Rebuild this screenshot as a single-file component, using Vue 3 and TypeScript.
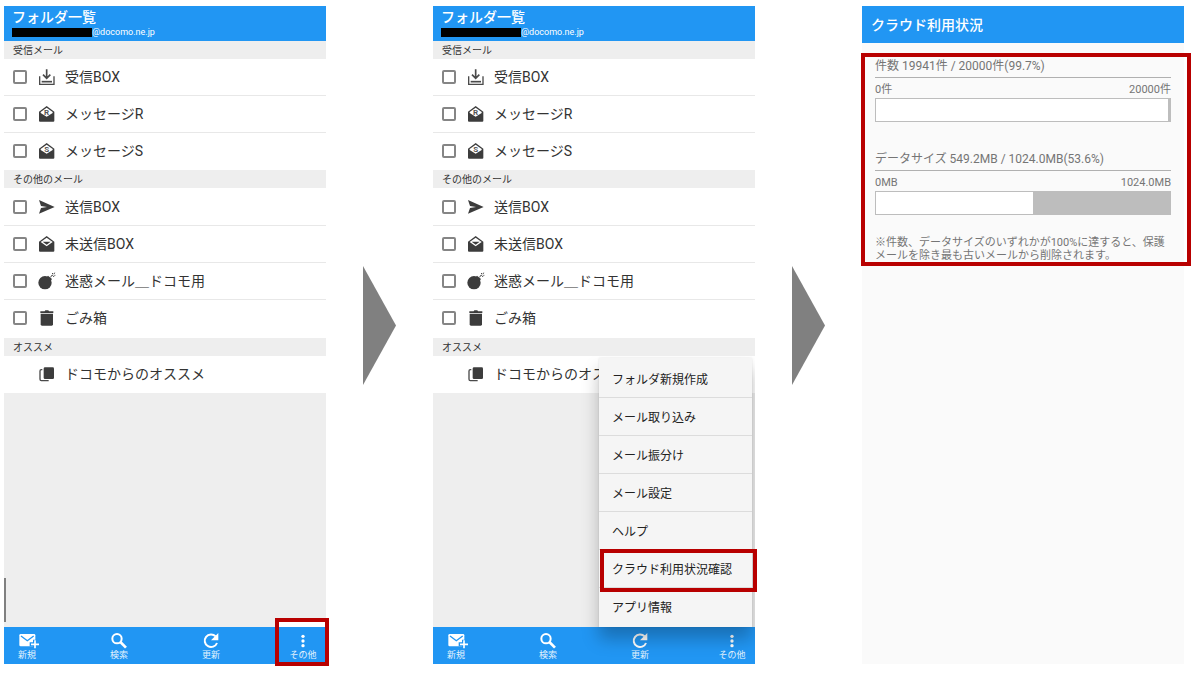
<script setup lang="ts">
import { ref } from 'vue'

type IconName = 'inbox' | 'msgR' | 'msgS' | 'send' | 'draft' | 'bomb' | 'trash' | 'copy'

interface Folder {
  label: string
  icon: IconName
  selectable: boolean
}

interface FolderGroup {
  title: string
  roomy?: boolean
  folders: Folder[]
}

interface Usage {
  summary: string
  min: string
  max: string
  percent: number
}

const groups: FolderGroup[] = [
  {
    title: '受信メール',
    folders: [
      { label: '受信BOX', icon: 'inbox', selectable: true },
      { label: 'メッセージR', icon: 'msgR', selectable: true },
      { label: 'メッセージS', icon: 'msgS', selectable: true },
    ],
  },
  {
    title: 'その他のメール',
    roomy: true,
    folders: [
      { label: '送信BOX', icon: 'send', selectable: true },
      { label: '未送信BOX', icon: 'draft', selectable: true },
      { label: '迷惑メール＿ドコモ用', icon: 'bomb', selectable: true },
      { label: 'ごみ箱', icon: 'trash', selectable: true },
    ],
  },
  {
    title: 'オススメ',
    folders: [{ label: 'ドコモからのオススメ', icon: 'copy', selectable: false }],
  },
]

const tools = ['新規', '検索', '更新', 'その他']

const menuItems = [
  'フォルダ新規作成',
  'メール取り込み',
  'メール振分け',
  'メール設定',
  'ヘルプ',
  'クラウド利用状況確認',
  'アプリ情報',
]

const usages: Usage[] = [
  { summary: '件数 19941件 / 20000件(99.7%)', min: '0件', max: '20000件', percent: 99.3 },
  { summary: 'データサイズ 549.2MB / 1024.0MB(53.6%)', min: '0MB', max: '1024.0MB', percent: 53.3 },
]

const screens = [
  { id: 'list', menuOpen: false },
  { id: 'menu', menuOpen: true },
]

const checked = ref<string[]>([])
</script>

<template>
  <main class="steps">
    <template v-for="screen in screens" :key="screen.id">
      <section class="phone">
        <header class="bar">
          <h1 class="title">フォルダ一覧</h1>
          <p class="account"><span class="mask"></span>@docomo.ne.jp</p>
        </header>

        <div class="content">
          <template v-for="group in groups" :key="group.title">
            <h2 class="group-title">{{ group.title }}</h2>
            <ul class="folders" :class="{ roomy: group.roomy }">
              <li v-for="folder in group.folders" :key="folder.label" class="folder">
                <input
                  v-if="folder.selectable"
                  :id="`${screen.id}-${folder.icon}`"
                  v-model="checked"
                  class="check"
                  type="checkbox"
                  :value="`${screen.id}-${folder.icon}`"
                />
                <span v-else class="check-space"></span>
                <svg class="icon" viewBox="0 0 48 48" aria-hidden="true">
                  <g v-if="folder.icon === 'inbox'" fill="none" stroke="#4a4a4a" stroke-width="5">
                    <path d="M23 1V28M12 17L23 28L34 17" />
                    <path d="M2 22V46H45V22" stroke-width="4" />
                    <path d="M8 38H39" stroke-width="5" />
                  </g>
                  <g v-else-if="folder.icon === 'msgR' || folder.icon === 'msgS'">
                    <path d="M0 17L23 0L46 17V44Q46 47 43 47H3Q0 47 0 44Z" fill="#3c3c3c" />
                    <path d="M23 5L41 18V21L23 32L5 21V18Z" fill="#fff" />
                    <text x="23" y="28" class="letter">{{ folder.icon === 'msgR' ? 'R' : 'S' }}</text>
                  </g>
                  <path
                    v-else-if="folder.icon === 'send'"
                    d="M0 3L47 24L0 44L6 27L24 24L6 21Z"
                    fill="#3c3c3c"
                  />
                  <g v-else-if="folder.icon === 'draft'">
                    <path d="M0 17L23 0L46 17V44Q46 47 43 47H3Q0 47 0 44Z" fill="#3c3c3c" />
                    <path d="M23 5L41 18L23 31L5 18Z" fill="#fff" />
                    <path d="M11 17H35L23 26Z" fill="#3c3c3c" />
                  </g>
                  <g v-else-if="folder.icon === 'bomb'">
                    <circle cx="18" cy="29" r="20" fill="#3c3c3c" />
                    <path d="M27 8L39 18L34 25L22 14Z" fill="#3c3c3c" />
                    <path
                      d="M35 13Q36 6 43 6M39 0L42 3M47 -1L45 3M49 7H46M44 12V9"
                      fill="none"
                      stroke="#4a4a4a"
                      stroke-width="3"
                    />
                  </g>
                  <g v-else-if="folder.icon === 'trash'" fill="#3c3c3c">
                    <path d="M4 4H17L19 1H28L30 4H43V9H4Z" />
                    <path d="M5 11H42V43Q42 47 38 47H9Q5 47 5 43Z" />
                  </g>
                  <g v-else>
                    <rect x="14" y="4" width="31" height="35" rx="4" fill="#3c3c3c" />
                    <path
                      d="M10 11H7Q3 11 3 15V40Q3 44 7 44H29"
                      fill="none"
                      stroke="#4a4a4a"
                      stroke-width="4"
                    />
                  </g>
                </svg>
                <label v-if="folder.selectable" :for="`${screen.id}-${folder.icon}`">{{ folder.label }}</label>
                <span v-else>{{ folder.label }}</span>
              </li>
            </ul>
          </template>
          <span v-if="!screen.menuOpen" class="scroll-mark"></span>
        </div>

        <nav class="toolbar">
          <button
            v-for="(tool, i) in tools"
            :key="tool"
            type="button"
            class="tool"
            :class="{ marked: i === 3 && !screen.menuOpen }"
          >
            <svg class="tool-icon" viewBox="0 0 60 48" aria-hidden="true">
              <g v-if="i === 0">
                <rect x="7" y="3" width="48" height="37" rx="4" fill="#fff" />
                <path d="M12 9L31 23L50 9" fill="none" stroke="#2196f3" stroke-width="4" />
                <path d="M54 20V48M38 34H66" stroke="#2196f3" stroke-width="12" />
                <path d="M54 22V46M42 34H66" stroke="#fff" stroke-width="5" />
              </g>
              <g v-else-if="i === 1" fill="none" stroke="#fff">
                <circle cx="24" cy="17" r="14" stroke-width="6" />
                <path d="M34 27L51 44" stroke-width="8" />
              </g>
              <g v-else-if="i === 2">
                <path d="M44 10A19 19 0 1 0 48 30" fill="none" stroke="#fff" stroke-width="6" />
                <path d="M52 0V22H30Z" fill="#fff" />
              </g>
              <g v-else fill="#fff">
                <circle cx="30" cy="10" r="5" />
                <circle cx="30" cy="24" r="5" />
                <circle cx="30" cy="38" r="5" />
              </g>
            </svg>
            <span>{{ tool }}</span>
          </button>
        </nav>

        <ul v-if="screen.menuOpen" class="menu">
          <li v-for="(item, i) in menuItems" :key="item" class="menu-row" :class="{ marked: i === 5 }">
            <button type="button" class="menu-item">{{ item }}</button>
          </li>
        </ul>
      </section>
      <div class="arrow"></div>
    </template>

    <section class="phone cloud">
      <header class="bar cloud-bar">
        <h1 class="title">クラウド利用状況</h1>
      </header>
      <div class="usage">
        <section v-for="usage in usages" :key="usage.max" class="meter">
          <h2 class="summary">{{ usage.summary }}</h2>
          <div class="range">
            <span>{{ usage.min }}</span>
            <span>{{ usage.max }}</span>
          </div>
          <div class="track">
            <div class="fill" :style="{ width: usage.percent + '%' }"></div>
          </div>
        </section>
        <p class="note">※件数、データサイズのいずれかが100%に達すると、保護メールを除き最も古いメールから削除されます。</p>
      </div>
    </section>
  </main>
</template>

<style>
body {
  margin: 0;
  background: #fff;
}
</style>

<style scoped>
* {
  box-sizing: border-box;
}

.steps {
  display: grid;
  grid-template-columns: 1fr 107px 1fr 107px 1fr;
  min-height: 100vh;
  padding: 6px 16px 13px 4px;
  font-family: Roboto, "Noto Sans CJK JP", sans-serif;
  color: #333;
}

h1,
h2,
p,
ul {
  margin: 0;
  padding: 0;
}

ul {
  list-style: none;
}

button {
  margin: 0;
  border: 0;
  background: none;
  font-family: inherit;
}

.phone {
  position: relative;
  display: flex;
  flex-direction: column;
  min-width: 0;
  background: #eee;
}

.bar {
  padding: 2px 8px 3px;
  background: #2196f3;
  color: #fff;
}

.title {
  font-size: 14px;
  line-height: 18px;
  font-weight: 500;
}

.account {
  display: flex;
  align-items: center;
  font-size: 9px;
  line-height: 12px;
}

.mask {
  width: 80px;
  height: 9px;
  background: #000;
}

.content {
  position: relative;
  flex: 1;
}

.group-title {
  padding: 2px 0 0 9px;
  font-size: 10px;
  line-height: 16px;
  font-weight: 400;
}

.folders {
  background: #fff;
}

.roomy {
  padding: 1px 0;
}

.folder {
  display: flex;
  align-items: center;
  height: 37px;
  padding-left: 9px;
  border-bottom: 1px solid #e8e8e8;
  font-size: 14px;
  line-height: 20px;
}

.folder:last-child {
  border-bottom-color: transparent;
}

.check {
  appearance: none;
  width: 14px;
  height: 14px;
  margin: 0;
  border: 2px solid #858585;
  border-radius: 2px;
}

.check:checked {
  background: #858585;
}

.check-space {
  width: 14px;
}

.icon {
  width: 16px;
  height: 16px;
  margin: 0 10px 0 12px;
  overflow: visible;
}

.letter {
  font-size: 24px;
  font-weight: 700;
  text-anchor: middle;
  fill: #555;
}

.scroll-mark {
  position: absolute;
  left: 0;
  bottom: 5px;
  width: 2px;
  height: 44px;
  background: #808080;
}

.toolbar {
  display: flex;
  justify-content: space-between;
  height: 37px;
  background: #2196f3;
}

.tool {
  position: relative;
  display: flex;
  flex-direction: column;
  align-items: center;
  width: 46px;
  padding: 6px 0 0;
  color: #e3f2fd;
  font-size: 9px;
  line-height: 12px;
}

.tool-icon {
  width: 20px;
  height: 16px;
  overflow: visible;
}

.tool.marked::after {
  content: "";
  position: absolute;
  inset: -9px -3px -2px -5px;
  border: 4px solid #b80000;
  background: linear-gradient(#fff 5px, transparent 5px);
  background-clip: padding-box;
}

.menu {
  position: absolute;
  right: 3px;
  bottom: 37px;
  width: 153px;
  padding: 2px 0 1px;
  background: #f5f5f5;
}

.menu::before {
  content: "";
  position: absolute;
  inset: 0;
  background: #f5f5f5;
  box-shadow: 0 12px 16px rgba(0, 0, 0, 0.25), 0 0 2px rgba(0, 0, 0, 0.1);
  clip-path: inset(-2px -3px -37px -24px);
}

.menu-row {
  position: relative;
  height: 38px;
  border-bottom: 1px solid #dcdcdc;
}

.menu-row:last-child {
  border-bottom: 0;
}

.menu-item {
  width: 100%;
  height: 100%;
  padding: 2px 0 0 13px;
  color: #222;
  font-size: 12px;
  line-height: 18px;
  text-align: left;
}

.menu-row.marked::after {
  content: "";
  position: absolute;
  inset: -1px -5px -5px 1px;
  z-index: 1;
  border: 4px solid #b80000;
  pointer-events: none;
}

.arrow {
  align-self: center;
  justify-self: center;
  width: 33px;
  height: 119px;
  margin-bottom: 19px;
  background: #808080;
  clip-path: polygon(0 0, 100% 50%, 0 100%);
}

.cloud {
  background: #fafafa;
}

.cloud-bar {
  padding: 10px 9px 9px;
}

.usage {
  position: relative;
  display: flex;
  flex-direction: column;
  margin-top: 14px;
  padding: 0 13px;
  color: #757575;
}

.usage::after {
  content: "";
  position: absolute;
  inset: -4px -7px -4px -1px;
  border: 4px solid #b80000;
  pointer-events: none;
}

.meter + .meter {
  margin-top: 28px;
}

.summary {
  padding-bottom: 2px;
  border-bottom: 1px solid #b0b0b0;
  font-size: 12px;
  line-height: 18px;
  font-weight: 400;
}

.range {
  display: flex;
  justify-content: space-between;
  margin-top: 4px;
  font-size: 11px;
  line-height: 16px;
}

.track {
  height: 24px;
  border: 1px solid #bdbdbd;
  background: #bdbdbd;
}

.fill {
  height: 100%;
  background: #fff;
}

.note {
  margin-top: 21px;
  font-size: 11px;
  line-height: 13px;
}
</style>
